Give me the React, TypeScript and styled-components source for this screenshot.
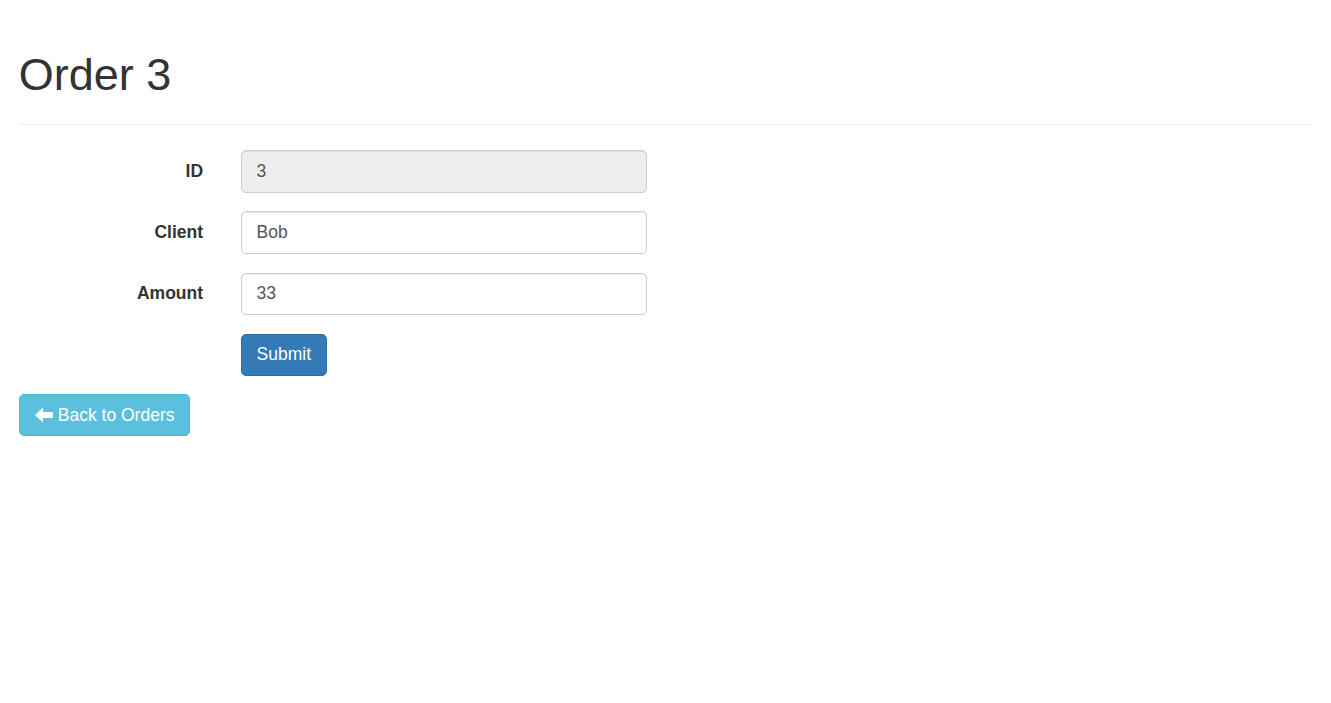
import React from "react";
import styled, { createGlobalStyle } from "styled-components";

const GlobalStyle = createGlobalStyle`
  html, body {
    margin: 0;
    padding: 0;
    background: #fff;
  }
  body {
    font-family: "Liberation Sans", Arial, Helvetica, sans-serif;
    font-size: 17.5px;
    line-height: 1.428571;
    color: #333;
  }
  * {
    box-sizing: border-box;
  }
`;

const Container = styled.div`
  padding: 0 18.75px;
`;

const PageHeader = styled.div`
  margin: 50px 0 25px;
  padding-bottom: 12px;
  border-bottom: 1px solid #eee;
`;

const Title = styled.h1`
  margin: 0 0 12.5px;
  font-size: 45px;
  font-weight: 400;
  line-height: 1.1;
  color: #333;
`;

const Form = styled.form`
  margin: 0;
`;

const FormRow = styled.div`
  display: flex;
  margin: 0 -18.75px 18.75px;
`;

const LabelCol = styled.label`
  width: 16.6667%;
  padding: 8.75px 18.75px 0;
  text-align: right;
  font-weight: 700;
`;

const FieldCol = styled.div<{ $offset?: boolean }>`
  width: 33.3333%;
  padding: 0 18.75px;
  margin-left: ${(p) => (p.$offset ? "16.6667%" : "0")};
`;

const Input = styled.input`
  display: block;
  width: 100%;
  height: 42.5px;
  padding: 7.5px 15px;
  font-family: inherit;
  font-size: 17.5px;
  line-height: 1.428571;
  color: #555;
  background: ${(p) => (p.disabled ? "#eee" : "#fff")};
  border: 1px solid #ccc;
  border-radius: 5px;
  box-shadow: inset 0 1px 1px rgba(0, 0, 0, 0.075);
  outline: none;
`;

const Button = styled.button<{ $variant: "primary" | "info" }>`
  display: inline-flex;
  align-items: center;
  gap: 5px;
  padding: 7.5px 15px;
  font-family: inherit;
  font-size: 17.5px;
  line-height: 1.428571;
  color: #fff;
  border-radius: 5px;
  cursor: pointer;
  background: ${(p) => (p.$variant === "primary" ? "#337ab7" : "#5bc0de")};
  border: 1px solid ${(p) => (p.$variant === "primary" ? "#2e6da4" : "#46b8da")};
`;

const ArrowLeft = () => (
  <svg width="18" height="16" viewBox="0 0 18 16" aria-hidden="true">
    <path d="M0 8 L8 0.5 L8 5 L18 5 L18 11 L8 11 L8 15.5 Z" fill="#fff" />
  </svg>
);

export default function App() {
  return (
    <>
      <GlobalStyle />
      <Container>
        <PageHeader>
          <Title>Order 3</Title>
        </PageHeader>
        <Form>
          <FormRow>
            <LabelCol>ID</LabelCol>
            <FieldCol>
              <Input value="3" disabled readOnly />
            </FieldCol>
          </FormRow>
          <FormRow>
            <LabelCol>Client</LabelCol>
            <FieldCol>
              <Input defaultValue="Bob" />
            </FieldCol>
          </FormRow>
          <FormRow>
            <LabelCol>Amount</LabelCol>
            <FieldCol>
              <Input defaultValue="33" />
            </FieldCol>
          </FormRow>
          <FormRow>
            <FieldCol $offset>
              <Button $variant="primary" type="button">Submit</Button>
            </FieldCol>
          </FormRow>
        </Form>
        <Button $variant="info" type="button">
          <ArrowLeft />
          Back to Orders
        </Button>
      </Container>
    </>
  );
}
